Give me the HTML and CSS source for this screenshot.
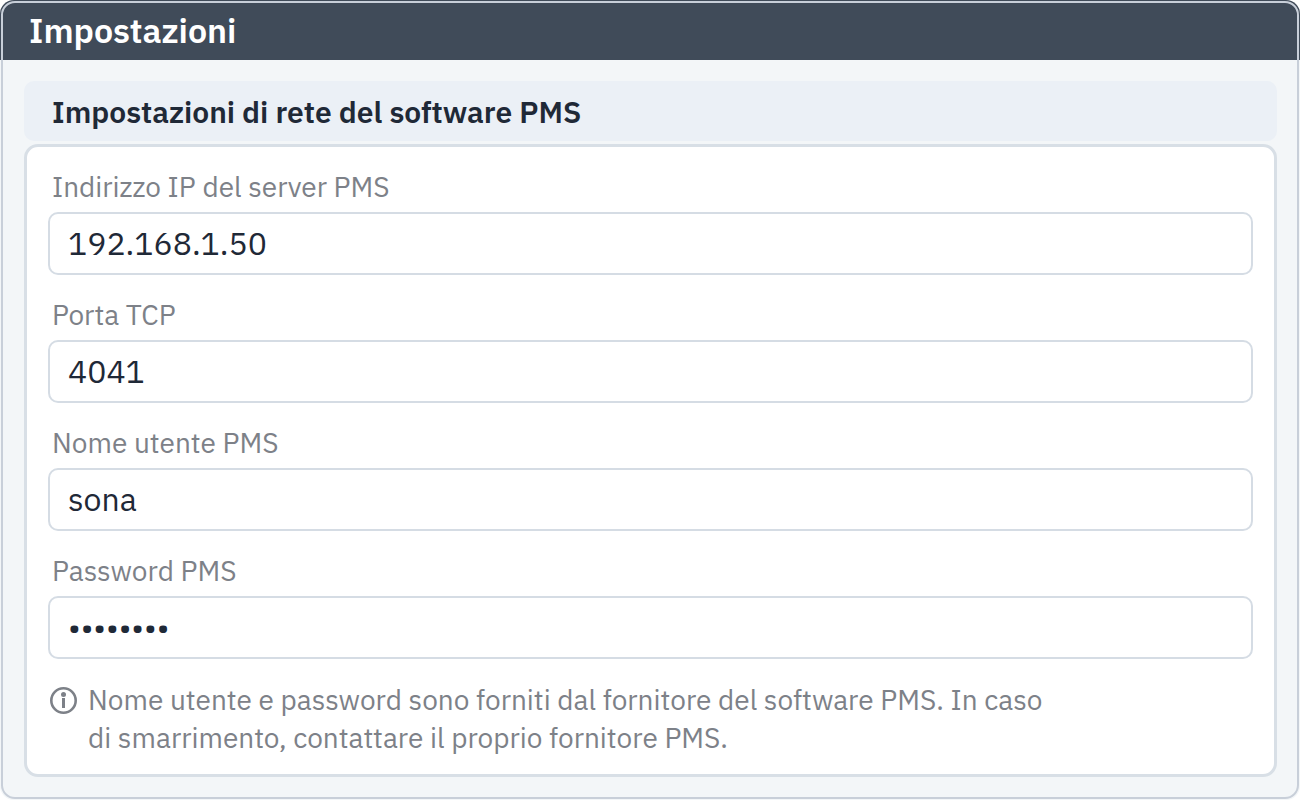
FILE: index.html
```html
<!DOCTYPE html>
<html lang="it">
<head>
    <meta charset="UTF-8">
    <meta name="viewport" content="width=device-width, initial-scale=1.0">
    <title>Impostazioni</title>
    <link rel="stylesheet" href="styles.css">
</head>
<body>
    <div class="window">
        <header class="titlebar">
            <h1>Impostazioni</h1>
        </header>

        <main class="content">
            <h2 class="section-title">Impostazioni di rete del software PMS</h2>

            <form class="card">
                <div class="field">
                    <label for="serverIp">Indirizzo IP del server PMS</label>
                    <input type="text" id="serverIp" value="192.168.1.50">
                </div>
                <div class="field">
                    <label for="tcpPort">Porta TCP</label>
                    <input type="text" id="tcpPort" value="4041">
                </div>
                <div class="field">
                    <label for="userName">Nome utente PMS</label>
                    <input type="text" id="userName" value="sona">
                </div>
                <div class="field">
                    <label for="password">Password PMS</label>
                    <input type="password" id="password" value="password" autocomplete="off">
                </div>

                <div class="note">
                    <svg class="info-icon" viewBox="0 0 28 28" aria-hidden="true">
                        <circle cx="13.5" cy="13.5" r="12.2" fill="none" stroke="currentColor" stroke-width="2.6"/>
                        <circle cx="13.5" cy="7.6" r="2.5" fill="currentColor"/>
                        <path d="M13.5 11v10" fill="none" stroke="currentColor" stroke-width="3"/>
                    </svg>
                    <p>Nome utente e password sono forniti dal fornitore del software PMS. In caso<br>
                    di smarrimento, contattare il proprio fornitore PMS.</p>
                </div>
            </form>
        </main>
    </div>
</body>
</html>
```

FILE: styles.css
```css
* {
    box-sizing: border-box;
}

body {
    margin: 0;
    background-color: #fff;
    color: #1f2937;
    font-family: "IBM Plex Sans", "Noto Sans", sans-serif;
}

h1, h2, p {
    margin: 0;
}

.window {
    position: relative;
    min-height: 100vh;
    background-color: #f3f6f8;
    border-radius: 14px;
    overflow: hidden;
}

/* Window outline, drawn over the title bar */
.window::after {
    content: "";
    position: absolute;
    inset: 1px;
    border: 2px solid #c8cfd9;
    border-radius: 14px;
    pointer-events: none;
}

.titlebar {
    padding: 8px 29px;
    background-color: #404b59;
    color: #fff;
}

.titlebar h1 {
    font-size: 34px;
    line-height: 44px;
    font-weight: 600;
}

.content {
    padding: 21px 23px 23px 24px;
}

.section-title {
    padding: 11px 28px 9px;
    margin-bottom: 3px;
    background-color: #ebf0f6;
    border-radius: 10px;
    font-size: 30px;
    line-height: 40px;
    font-weight: 600;
}

.card {
    padding: 21px 21px 17px;
    background-color: #fff;
    border: 3px solid #d8dfe6;
    border-radius: 14px;
}

.field {
    display: flex;
    flex-direction: column;
    gap: 6px;
    margin-bottom: 21px;
}

label {
    padding-left: 4px;
    color: #7d8188;
    font-size: 28px;
    line-height: 38px;
}

input {
    width: 100%;
    height: 63px;
    padding: 0 18px 2px;
    border: 2px solid #d5dce4;
    border-radius: 10px;
    background-color: #fff;
    color: #1f2937;
    font-family: inherit;
    font-size: 32px;
}

input:focus {
    outline: none;
    border-color: #404b59;
}

.note {
    display: flex;
    gap: 10px;
    padding: 1px 2px 0;
    color: #7d8188;
    font-size: 28px;
    line-height: 38px;
}

.info-icon {
    flex: none;
    width: 28px;
    height: 40px;
}
```
